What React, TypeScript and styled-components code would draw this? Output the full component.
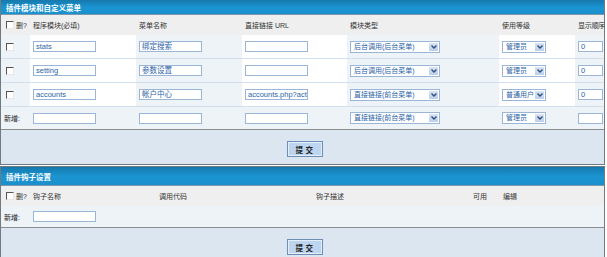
import React from "react";
import styled, { createGlobalStyle } from "styled-components";

const GlobalStyle = createGlobalStyle`
  html, body { margin: 0; padding: 0; background: #fff; }
  body {
    font-family: "Liberation Sans", "Noto Sans CJK SC", sans-serif;
    font-size: 7px;
    color: #333;
  }
`;

const Page = styled.div`
  width: 605px;
  display: flex;
  flex-direction: column;
  gap: 1px;
`;

const Panel = styled.div<{ $cut?: boolean }>`
  border: 1px solid #6f7a82;
  border-top-width: ${(p) => (p.$cut ? 0 : 1)}px;
  display: flex;
  flex-direction: column;
`;

const Title = styled.div<{ $h: number }>`
  height: ${(p) => p.$h}px;
  display: flex;
  align-items: center;
  padding-left: 5px;
  background: linear-gradient(#1679ad, #1b95d2 55%, #1a90cc);
  border-bottom: 1px solid #7d98ad;
  color: #fff;
  font-weight: bold;
  font-size: 7.5px;
`;

const Row = styled.div<{ $cols: string; $h: number; $bg?: string; $line?: boolean }>`
  display: grid;
  grid-template-columns: ${(p) => p.$cols};
  height: ${(p) => p.$h}px;
  background: ${(p) => p.$bg || "#eef3f8"};
  border-bottom: ${(p) => (p.$line ? "1px solid #d3e1ee" : "none")};
`;

const Cell = styled.div<{ $white?: boolean; $open?: boolean }>`
  display: flex;
  align-items: center;
  gap: 2px;
  padding-left: 3px;
  background: ${(p) => (p.$white ? "#fff" : "transparent")};
  white-space: nowrap;
  overflow: ${(p) => (p.$open ? "visible" : "hidden")};
`;

const HeadText = styled.span<{ $tight?: boolean }>`
  color: #333;
  letter-spacing: ${(p) => (p.$tight ? "-0.3px" : "0")};
`;

const Box = styled.input`
  appearance: none;
  margin: 0 0 0 2px;
  width: 8px;
  height: 8px;
  box-sizing: border-box;
  border-top: 1px solid #555;
  border-left: 1px solid #555;
  border-right: 1px solid #e8e8e8;
  border-bottom: 1px solid #e8e8e8;
  background: #fff;
`;

const TextBox = styled.div<{ $w: number }>`
  width: ${(p) => p.$w}px;
  height: 11px;
  box-sizing: border-box;
  border: 1px solid #9ab6d6;
  background: #fff;
  color: #2c63a6;
  font-size: 7.5px;
  line-height: 9px;
  padding-left: 2px;
  overflow: hidden;
  white-space: nowrap;
`;

const SelectBox = styled.div<{ $w: number }>`
  width: ${(p) => p.$w}px;
  height: 12px;
  box-sizing: border-box;
  border: 1px solid #9ab6d6;
  background: #fff;
  display: flex;
  align-items: stretch;
  color: #2c63a6;
  font-size: 7px;
`;

const SelectText = styled.span`
  flex: 1;
  padding-left: 3px;
  line-height: 10px;
  overflow: hidden;
  white-space: nowrap;
`;

const Arrow = styled.span`
  width: 9px;
  margin: 1px;
  background: linear-gradient(#d8e3f3, #bccfeb);
  display: flex;
  align-items: center;
  justify-content: center;
`;

const Footer = styled.div<{ $h: number }>`
  height: ${(p) => p.$h}px;
  border-top: 1px solid #8c8c8c;
  background: #dce6f1;
  display: flex;
  justify-content: center;
  align-items: flex-start;
  padding-top: 11px;
  box-sizing: border-box;
`;

const Button = styled.button`
  width: 36px;
  height: 16px;
  padding: 0 0 0 2px;
  margin-left: 4px;
  border: 1px solid #6d8fb5;
  box-shadow: inset 0 0 0 1px #e4eefa;
  background: #bdd5ef;
  color: #222;
  font-family: "Noto Sans CJK SC", sans-serif;
  font-weight: bold;
  font-size: 7.5px;
  letter-spacing: 2.5px;
`;

const Label = styled.span`
  color: #222;
`;

const Chevron = () => (
  <svg width="6" height="4" viewBox="0 0 6 4">
    <path d="M0.5 0.5 L3 3 L5.5 0.5" fill="none" stroke="#2b4a78" strokeWidth="1.3" />
  </svg>
);

function Select({ w, text }: { w: number; text: string }) {
  return (
    <SelectBox $w={w}>
      <SelectText>{text}</SelectText>
      <Arrow>
        <Chevron />
      </Arrow>
    </SelectBox>
  );
}

const cols1 = "29px 106px 106px 105px 152px 76px 29px";
const cols2 = "29px 126px 157px 157px 30px 104px";

const modules = [
  { id: "stats", name: "绑定搜索", url: "", type: "后台调用(后台菜单)", level: "管理员", order: "0" },
  { id: "setting", name: "参数设置", url: "", type: "后台调用(后台菜单)", level: "管理员", order: "0" },
  { id: "accounts", name: "帐户中心", url: "accounts.php?action=list", type: "直接链接(前台菜单)", level: "普通用户", order: "0" },
];

export default function App() {
  return (
    <Page>
      <GlobalStyle />
      <Panel $cut>
        <Title $h={14}>插件模块和自定义菜单</Title>
        <Row $cols={cols1} $h={20} $bg="#efefef">
          <Cell>
            <Box type="checkbox" />
            <HeadText>删?</HeadText>
          </Cell>
          <Cell><HeadText>程序模块(必填)</HeadText></Cell>
          <Cell><HeadText>菜单名称</HeadText></Cell>
          <Cell><HeadText>直接链接 URL</HeadText></Cell>
          <Cell><HeadText>模块类型</HeadText></Cell>
          <Cell><HeadText>使用等级</HeadText></Cell>
          <Cell $open><HeadText $tight>显示顺序</HeadText></Cell>
        </Row>
        {modules.map((m) => (
          <Row key={m.id} $cols={cols1} $h={23} $line>
            <Cell><Box type="checkbox" /></Cell>
            <Cell $white><TextBox $w={63}>{m.id}</TextBox></Cell>
            <Cell><TextBox $w={63}>{m.name}</TextBox></Cell>
            <Cell $white><TextBox $w={63}>{m.url}</TextBox></Cell>
            <Cell><Select w={90} text={m.type} /></Cell>
            <Cell $white><Select w={44} text={m.level} /></Cell>
            <Cell><TextBox $w={25}>{m.order}</TextBox></Cell>
          </Row>
        ))}
        <Row $cols={cols1} $h={22}>
          <Cell><Label>新增:</Label></Cell>
          <Cell><TextBox $w={63} /></Cell>
          <Cell><TextBox $w={63} /></Cell>
          <Cell><TextBox $w={63} /></Cell>
          <Cell><Select w={90} text="直接链接(前台菜单)" /></Cell>
          <Cell><Select w={44} text="管理员" /></Cell>
          <Cell><TextBox $w={25} /></Cell>
        </Row>
        <Footer $h={35}>
          <Button>提交</Button>
        </Footer>
      </Panel>
      <Panel>
        <Title $h={18}>插件钩子设置</Title>
        <Row $cols={cols2} $h={20} $bg="#efefef">
          <Cell>
            <Box type="checkbox" />
            <HeadText>删?</HeadText>
          </Cell>
          <Cell><HeadText>钩子名称</HeadText></Cell>
          <Cell><HeadText>调用代码</HeadText></Cell>
          <Cell><HeadText>钩子描述</HeadText></Cell>
          <Cell><HeadText>可用</HeadText></Cell>
          <Cell><HeadText>编辑</HeadText></Cell>
        </Row>
        <Row $cols={cols2} $h={21}>
          <Cell><Label>新增:</Label></Cell>
          <Cell><TextBox $w={63} /></Cell>
          <Cell />
          <Cell />
          <Cell />
          <Cell />
        </Row>
        <Footer $h={35}>
          <Button>提交</Button>
        </Footer>
      </Panel>
    </Page>
  );
}
